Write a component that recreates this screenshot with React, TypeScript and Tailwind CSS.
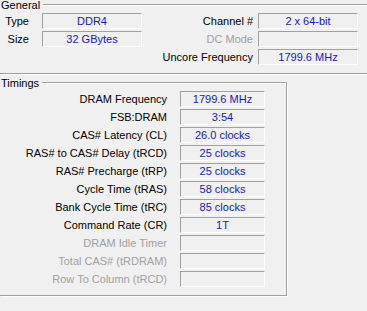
import React from 'react';

type Row = { label: string; value?: string; disabled?: boolean };

const generalLeft: Row[] = [
  { label: 'Type', value: 'DDR4' },
  { label: 'Size', value: '32 GBytes' },
];

const generalRight: Row[] = [
  { label: 'Channel #', value: '2 x 64-bit' },
  { label: 'DC Mode', disabled: true },
  { label: 'Uncore Frequency', value: '1799.6 MHz' },
];

const timings: Row[] = [
  { label: 'DRAM Frequency', value: '1799.6 MHz' },
  { label: 'FSB:DRAM', value: '3:54' },
  { label: 'CAS# Latency (CL)', value: '26.0 clocks' },
  { label: 'RAS# to CAS# Delay (tRCD)', value: '25 clocks' },
  { label: 'RAS# Precharge (tRP)', value: '25 clocks' },
  { label: 'Cycle Time (tRAS)', value: '58 clocks' },
  { label: 'Bank Cycle Time (tRC)', value: '85 clocks' },
  { label: 'Command Rate (CR)', value: '1T' },
  { label: 'DRAM Idle Timer', disabled: true },
  { label: 'Total CAS# (tRDRAM)', disabled: true },
  { label: 'Row To Column (tRCD)', disabled: true },
];

// sunken read-only field, like the win32 static boxes
const Field: React.FC<{ value?: string; className: string }> = ({ value, className }) => (
  <div
    className={`flex h-[16px] items-center justify-center border border-t-[#a0a0a0] border-l-[#a0a0a0] border-r-white border-b-white leading-[14px] text-[#1818b8] ${className}`}
  >
    {value}
  </div>
);

const Label: React.FC<{ row: Row; className?: string }> = ({ row, className = '' }) => (
  <span className={`whitespace-nowrap leading-[16px] ${row.disabled ? 'text-[#a0a0a0]' : 'text-black'} ${className}`}>
    {row.label}
  </span>
);

export default function App() {
  return (
    <div
      className="h-[311px] w-[367px] overflow-hidden bg-[#f0f0f0] text-[11px]"
      style={{ fontFamily: '"Liberation Sans", Arial, sans-serif' }}
    >
      {/* GENERAL */}
      <div className="mt-[4px] border-t border-b border-[#a0a0a0] pb-[8px] shadow-[inset_0_1px_0_#fff,0_1px_0_#fff]">
        <div className="-mt-[5px] flex h-[10px]">
          <span className="bg-[#f0f0f0] pl-[1px] pr-[3px] leading-[10px] text-black">General</span>
        </div>
        <div className="mt-[3px] flex">
          <div className="flex w-[142px] flex-col gap-[2px]">
            {generalLeft.map(row => (
              <div key={row.label} className="flex items-center gap-[13px]">
                <Label row={row} className="w-[29px] text-right" />
                <Field value={row.value} className="w-[100px]" />
              </div>
            ))}
          </div>
          <div className="flex flex-1 flex-col items-end gap-[2px] pr-[9px]">
            {generalRight.map(row => (
              <div key={row.label} className="flex items-center gap-[5px]">
                <Label row={row} />
                <Field value={row.value} className="w-[100px]" />
              </div>
            ))}
          </div>
        </div>
      </div>

      {/* TIMINGS */}
      <div className="mt-[8px] w-[287px] border-t border-r border-b border-[#a0a0a0] pb-[8px] shadow-[inset_0_1px_0_#fff,1px_1px_0_#fff]">
        <div className="-mt-[5px] flex h-[10px]">
          <span className="bg-[#f0f0f0] pl-[1px] pr-[3px] leading-[10px] text-black">Timings</span>
        </div>
        <div className="mt-[3px] flex flex-col gap-[2px]">
          {timings.map(row => (
            <div key={row.label} className="flex items-center gap-[13px]">
              <Label row={row} className="w-[167px] text-right" />
              <Field value={row.value} className="w-[85px]" />
            </div>
          ))}
        </div>
      </div>
    </div>
  );
}
